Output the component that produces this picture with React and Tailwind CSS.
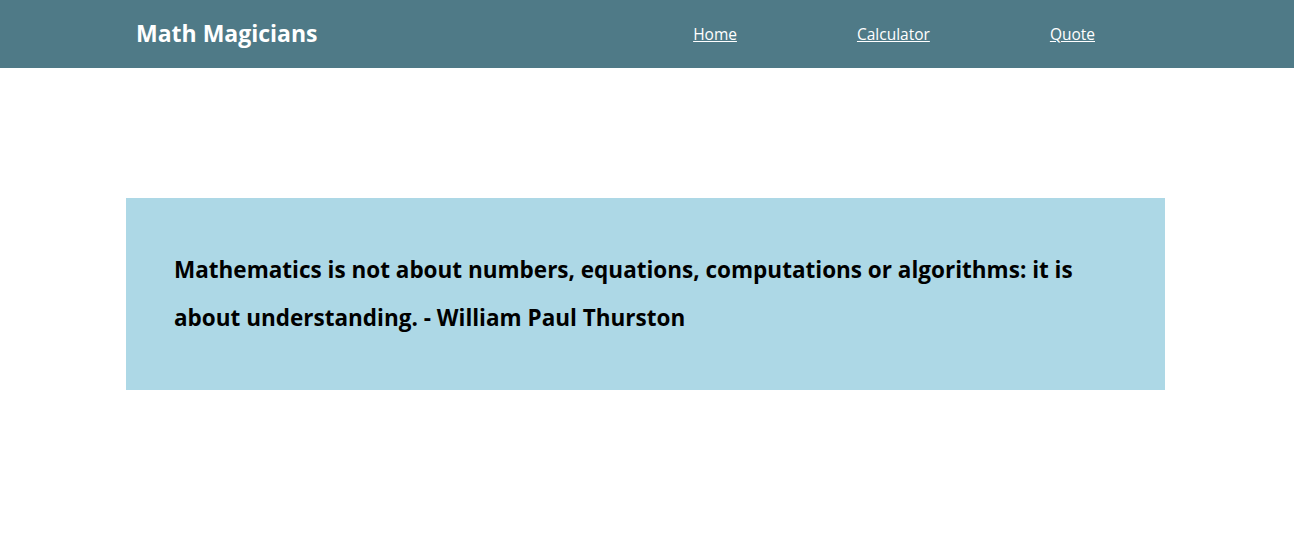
export default function App() {
  return (
    <div className="min-h-[543px] bg-white font-['Open_Sans','Noto_Sans',sans-serif]">
      <header className="h-[68px] bg-[#4f7a87] flex items-center pl-[136px] pr-[199px]">
        <h1 className="text-[23px] font-bold text-white -mt-[1px]">Math Magicians</h1>
        <nav className="ml-auto flex items-center gap-[120px] mt-[1px]">
          <a href="#" className="text-white text-[15.5px] underline">Home</a>
          <a href="#" className="text-white text-[15.5px] underline">Calculator</a>
          <a href="#" className="text-white text-[15.5px] underline">Quote</a>
        </nav>
      </header>

      <main className="pt-[130px]">
        <section className="ml-[126px] w-[1039px] bg-[#add8e6] px-[48px] pt-[48px] pb-[48px]">
          <p className="text-[22.5px] font-bold leading-[48px] text-black">
            Mathematics is not about numbers, equations, computations or algorithms: it is about understanding. - William Paul Thurston
          </p>
        </section>
      </main>
    </div>
  );
}
